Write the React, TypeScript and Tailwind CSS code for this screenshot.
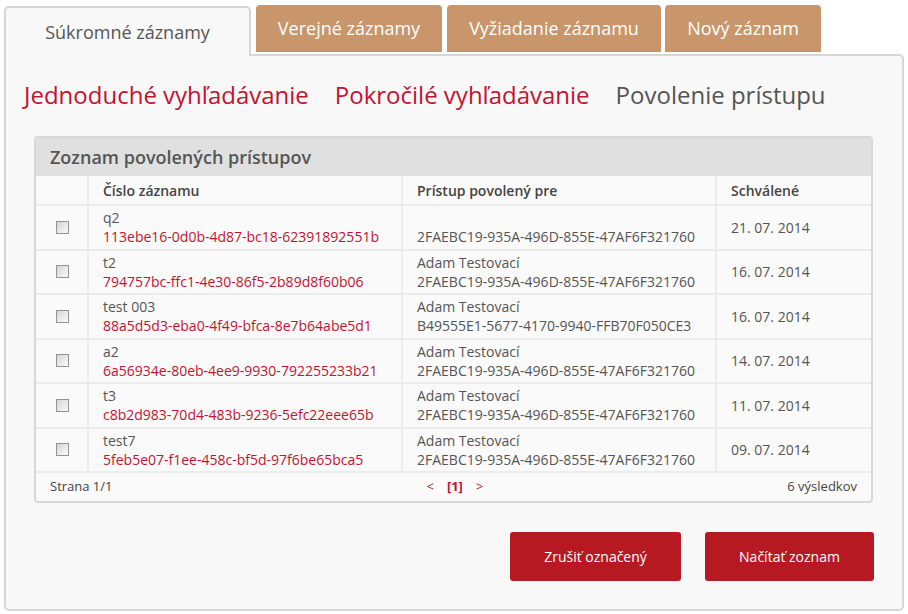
import React from "react";

const rows = [
  { name: "q2", id: "113ebe16-0d0b-4d87-bc18-62391892551b", who: "", guid: "2FAEBC19-935A-496D-855E-47AF6F321760", date: "21. 07. 2014" },
  { name: "t2", id: "794757bc-ffc1-4e30-86f5-2b89d8f60b06", who: "Adam Testovací", guid: "2FAEBC19-935A-496D-855E-47AF6F321760", date: "16. 07. 2014" },
  { name: "test 003", id: "88a5d5d3-eba0-4f49-bfca-8e7b64abe5d1", who: "Adam Testovací", guid: "B49555E1-5677-4170-9940-FFB70F050CE3", date: "16. 07. 2014" },
  { name: "a2", id: "6a56934e-80eb-4ee9-9930-792255233b21", who: "Adam Testovací", guid: "2FAEBC19-935A-496D-855E-47AF6F321760", date: "14. 07. 2014" },
  { name: "t3", id: "c8b2d983-70d4-483b-9236-5efc22eee65b", who: "Adam Testovací", guid: "2FAEBC19-935A-496D-855E-47AF6F321760", date: "11. 07. 2014" },
  { name: "test7", id: "5feb5e07-f1ee-458c-bf5d-97f6be65bca5", who: "Adam Testovací", guid: "2FAEBC19-935A-496D-855E-47AF6F321760", date: "09. 07. 2014" },
];

function Check() {
  return (
    <span className="block w-[13px] h-[13px] border border-[#939393] bg-gradient-to-br from-[#d4d4d4] to-[#fbfbfb]" />
  );
}

export default function App() {
  return (
    <div className="w-[908px] h-[614px] bg-white font-['Open_Sans',sans-serif] text-[#555] overflow-hidden">
      <div className="pl-[4px] pt-[5px] flex items-end">
        <div className="relative z-10 w-[247px] h-[50px] -mb-[2px] bg-[#f8f8f8] border-2 border-b-0 border-[#d6d6d6] rounded-t-[5px] flex items-center justify-center text-[18px] text-[#555]">
          Súkromné záznamy
        </div>
        <div className="ml-[5px] w-[186px] h-[47px] mb-[2px] bg-[#c8966a] rounded-t-[4px] flex items-center justify-center text-[18px] text-white">
          Verejné záznamy
        </div>
        <div className="ml-[5px] w-[214px] h-[47px] mb-[2px] bg-[#c8966a] rounded-t-[4px] flex items-center justify-center text-[18px] text-white">
          Vyžiadanie záznamu
        </div>
        <div className="ml-[4px] w-[156px] h-[47px] mb-[2px] bg-[#c8966a] rounded-t-[4px] flex items-center justify-center text-[18px] text-white">
          Nový záznam
        </div>
      </div>
      <div className="ml-[4px] w-[900px] h-[557px] bg-[#f8f8f8] border-2 border-[#d6d6d6] rounded-b-[5px] rounded-tr-[5px]">
        <div className="pl-[18px] pt-[22px] flex gap-[26px] text-[24px] leading-[34px]">
          <span className="text-[#c4122f]">Jednoduché vyhľadávanie</span>
          <span className="text-[#c4122f]">Pokročilé vyhľadávanie</span>
          <span className="text-[#555]">Povolenie prístupu</span>
        </div>
        <div className="ml-[28px] mt-[24px] w-[839px] border-2 border-[#d8d8d8] rounded-[4px] bg-[#fafafa] overflow-hidden">
          <div className="h-[38px] bg-[#e0e0e0] pl-[14px] flex items-center text-[18px] font-semibold text-[#555]">
            Zoznam povolených prístupov
          </div>
          <div className="flex h-[28px] text-[14px] font-semibold text-[#444]">
            <div className="w-[51px]" />
            <div className="w-[314px] border-l-2 border-[#ececec] pl-[14px] flex items-center">Číslo záznamu</div>
            <div className="w-[314px] border-l-2 border-[#ececec] pl-[14px] flex items-center">Prístup povolený pre</div>
            <div className="flex-1 border-l-2 border-[#ececec] pl-[14px] flex items-center">Schválené</div>
          </div>
          {rows.map((r) => (
            <div key={r.id} className="flex h-[44.5px] border-t-2 border-[#ececec] text-[14px] leading-[19px]">
              <div className="w-[51px] flex items-center justify-center pl-[1px]">
                <Check />
              </div>
              <div className="w-[314px] border-l-2 border-[#ececec] pl-[14px] flex flex-col justify-center">
                <span className="text-[#555]">{r.name}</span>
                <span className="text-[#c4122f]">{r.id}</span>
              </div>
              <div className="w-[314px] border-l-2 border-[#ececec] pl-[14px] flex flex-col justify-center">
                <span className="text-[#555] h-[19px]">{r.who}</span>
                <span className="text-[#555]">{r.guid}</span>
              </div>
              <div className="flex-1 border-l-2 border-[#ececec] pl-[14px] flex items-center text-[#555]">{r.date}</div>
            </div>
          ))}
          <div className="h-[30px] border-t-2 border-[#ececec] flex items-center px-[14px] text-[13px] text-[#444]">
            <span>Strana 1/1</span>
            <div className="flex-1 flex justify-center gap-[13px] text-[#c4122f] pl-[10px]">
              <span>&lt;</span>
              <span className="font-bold">[1]</span>
              <span>&gt;</span>
            </div>
            <span>6 výsledkov</span>
          </div>
        </div>
        <div className="flex justify-end gap-[24px] mt-[29px] mr-[28px]">
          <button className="w-[171px] h-[49px] bg-[#b71923] rounded-[3px] text-white text-[14px]">Zrušiť označený</button>
          <button className="w-[169px] h-[49px] bg-[#b71923] rounded-[3px] text-white text-[14px]">Načítať zoznam</button>
        </div>
      </div>
    </div>
  );
}
